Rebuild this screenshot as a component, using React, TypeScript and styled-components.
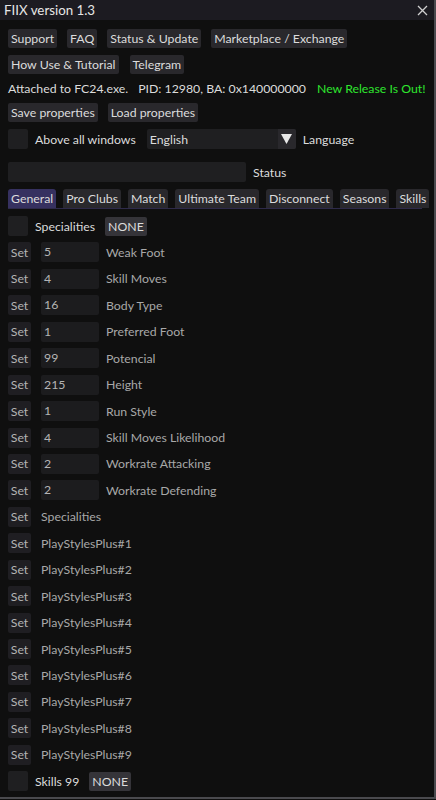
import React from "react";
import styled, { createGlobalStyle } from "styled-components";

const GlobalStyle = createGlobalStyle`
  html, body {
    margin: 0;
    padding: 0;
    background: #0f0f0f;
  }
  * {
    box-sizing: border-box;
  }
`;

// Main ImGui-like window
const Window = styled.div`
  width: 436px;
  height: 799px;
  background: #0f0f0f;
  border-right: 2px solid #4a4a4e;
  border-bottom: 2px solid #4a4a4e;
  font-family: "Lato", "Open Sans", sans-serif;
  font-size: 12.3px;
  color: #dcdcdc;
  overflow: hidden;
  display: flex;
  flex-direction: column;
`;

const TitleBar = styled.div`
  height: 20px;
  flex-shrink: 0;
  background: #1c1b21;
  display: flex;
  align-items: center;
  justify-content: space-between;
  padding: 0 6px 0 4px;
`;

const Title = styled.span`
  font-size: 13.3px;
  color: #e6e6e6;
`;

const Content = styled.div`
  padding: 9px 8px 0 8px;
  display: flex;
  flex-direction: column;
  gap: 7px;
`;

const Row = styled.div<{ $gap?: number }>`
  display: flex;
  align-items: center;
  gap: ${(p) => p.$gap ?? 10}px;
  height: 19px;
`;

const Button = styled.button<{ $light?: boolean }>`
  height: 19px;
  padding: 0 3px;
  border: none;
  border-radius: 2px;
  background: ${(p) => (p.$light ? "#353439" : "#29282c")};
  color: #dcdcdc;
  font: inherit;
  line-height: 19px;
  white-space: nowrap;
`;

const InfoRow = styled.div`
  display: flex;
  align-items: center;
  height: 15px;
  white-space: nowrap;
`;

const Spaced = styled.span`
  margin-left: 10px;
`;

const Green = styled.span`
  color: #2ee62e;
  margin-left: 11px;
`;

const Checkbox = styled.div`
  width: 20px;
  height: 20px;
  border-radius: 2px;
  background: #1f1f21;
  flex-shrink: 0;
`;

const ControlRow = styled.div<{ $top?: number }>`
  display: flex;
  align-items: center;
  height: 20px;
  margin-top: ${(p) => p.$top ?? 0}px;
`;

const Label = styled.span<{ $left?: number }>`
  margin-left: ${(p) => p.$left ?? 7}px;
  white-space: nowrap;
`;

const Combo = styled.div`
  width: 149px;
  height: 20px;
  margin-left: 11px;
  border-radius: 2px;
  background: #1f1f21;
  display: flex;
  align-items: center;
  padding-left: 3px;
`;

const ComboText = styled.span`
  flex: 1;
`;

const ComboArrow = styled.div`
  width: 18px;
  height: 20px;
  background: #29282c;
  border-radius: 0 2px 2px 0;
  display: flex;
  align-items: center;
  justify-content: center;
`;

const StatusInput = styled.div`
  width: 238px;
  height: 20px;
  border-radius: 2px;
  background: #1f1f21;
`;

const TabBar = styled.div`
  display: flex;
  align-items: flex-end;
  gap: 7px;
  height: 20px;
  border-bottom: 1px solid #2e2a4a;
  margin-right: 4px;
`;

const Tab = styled.div<{ $active?: boolean }>`
  height: 19px;
  padding: 0 3px;
  border-radius: 3px 3px 0 0;
  background: ${(p) => (p.$active ? "#363160" : "#29282c")};
  line-height: 19px;
  white-space: nowrap;
`;

const List = styled.div`
  display: flex;
  flex-direction: column;
  gap: 6.45px;
`;

const SetButton = styled.button`
  width: 23px;
  height: 20px;
  padding: 0;
  border: none;
  border-radius: 2px;
  background: #1f1e22;
  color: #b4b4b4;
  font: inherit;
  flex-shrink: 0;
`;

const ValueInput = styled.div`
  width: 58px;
  height: 20px;
  margin-left: 10px;
  border-radius: 2px;
  background: #1c1c1e;
  color: #b4b4b4;
  padding-left: 3px;
  line-height: 20px;
`;

const FieldLabel = styled.span<{ $left: number }>`
  margin-left: ${(p) => p.$left}px;
  color: #a8a8a8;
  white-space: nowrap;
`;

const CloseIcon = () => (
  <svg width="11" height="11" viewBox="0 0 11 11">
    <path d="M1 1 L10 10 M10 1 L1 10" stroke="#d0d0d0" strokeWidth="1.3" />
  </svg>
);

const ArrowDown = () => (
  <svg width="11" height="10" viewBox="0 0 11 10">
    <path d="M0 0 H11 L5.5 10 Z" fill="#e8e8e8" />
  </svg>
);

const valueFields: [string, string][] = [
  ["5", "Weak Foot"],
  ["4", "Skill Moves"],
  ["16", "Body Type"],
  ["1", "Preferred Foot"],
  ["99", "Potencial"],
  ["215", "Height"],
  ["1", "Run Style"],
  ["4", "Skill Moves Likelihood"],
  ["2", "Workrate Attacking"],
  ["2", "Workrate Defending"],
];

const plainFields = [
  "Specialities",
  ...Array.from({ length: 9 }, (_, i) => `PlayStylesPlus#${i + 1}`),
];

const tabs = ["General", "Pro Clubs", "Match", "Ultimate Team", "Disconnect", "Seasons", "Skills"];

export default function App() {
  return (
    <>
      <GlobalStyle />
      <Window>
        <TitleBar>
          <Title>FIIX version 1.3</Title>
          <CloseIcon />
        </TitleBar>
        <Content>
          <Row>
            <Button>Support</Button>
            <Button>FAQ</Button>
            <Button>Status &amp; Update</Button>
            <Button>Marketplace / Exchange</Button>
          </Row>
          <Row $gap={11}>
            <Button>How Use &amp; Tutorial</Button>
            <Button>Telegram</Button>
          </Row>
          <InfoRow>
            <span>Attached to FC24.exe.</span>
            <Spaced>PID: 12980, BA: 0x140000000</Spaced>
            <Green>New Release Is Out!</Green>
          </InfoRow>
          <Row>
            <Button>Save properties</Button>
            <Button>Load properties</Button>
          </Row>
          <ControlRow>
            <Checkbox />
            <Label>Above all windows</Label>
            <Combo>
              <ComboText>English</ComboText>
              <ComboArrow>
                <ArrowDown />
              </ComboArrow>
            </Combo>
            <Label>Language</Label>
          </ControlRow>
          <ControlRow $top={6}>
            <StatusInput />
            <Label>Status</Label>
          </ControlRow>
          <TabBar>
            {tabs.map((t, i) => (
              <Tab key={t} $active={i === 0}>
                {t}
              </Tab>
            ))}
          </TabBar>
          <List>
            <ControlRow>
              <Checkbox />
              <Label>Specialities</Label>
              <Label $left={10}>
                <Button $light>NONE</Button>
              </Label>
            </ControlRow>
            {valueFields.map(([v, l]) => (
              <ControlRow key={l}>
                <SetButton>Set</SetButton>
                <ValueInput>{v}</ValueInput>
                <FieldLabel $left={7}>{l}</FieldLabel>
              </ControlRow>
            ))}
            {plainFields.map((l) => (
              <ControlRow key={l}>
                <SetButton>Set</SetButton>
                <FieldLabel $left={10}>{l}</FieldLabel>
              </ControlRow>
            ))}
            <ControlRow>
              <Checkbox />
              <Label>Skills 99</Label>
              <Label $left={10}>
                <Button $light>NONE</Button>
              </Label>
            </ControlRow>
          </List>
        </Content>
      </Window>
    </>
  );
}
